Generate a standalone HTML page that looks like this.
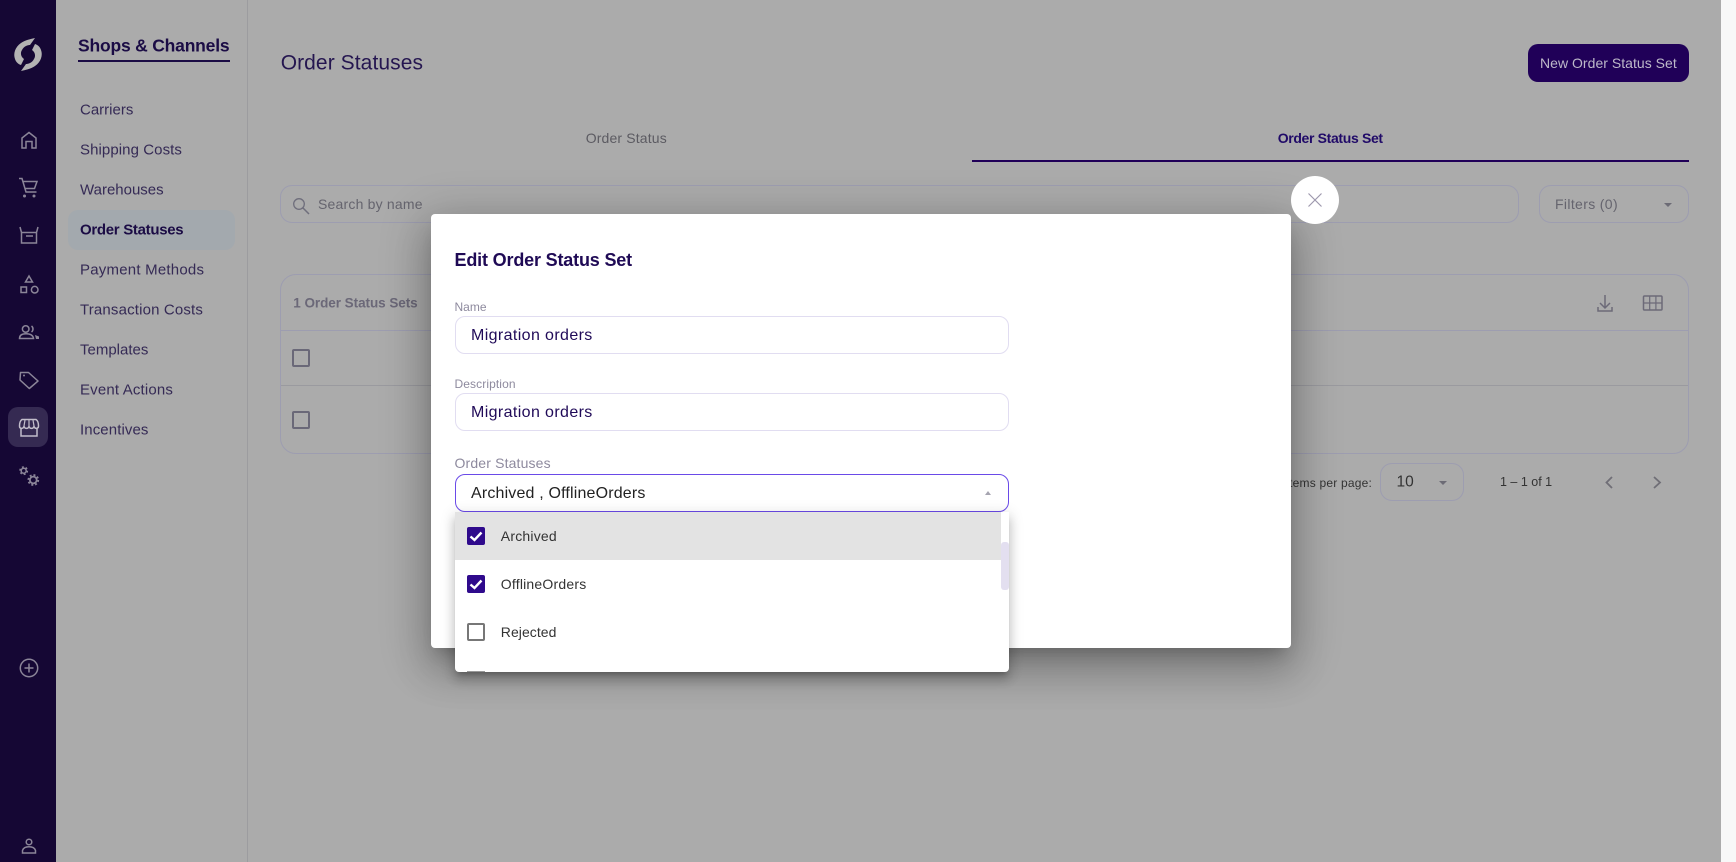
<!DOCTYPE html>
<html lang="en"><head><meta charset="utf-8"><title>Order Statuses</title>
<style>
html,body{margin:0;padding:0;width:1736px;height:862px;overflow:hidden;background:#ababab}
body{font-family:"Liberation Sans",sans-serif;position:relative}
.a{position:absolute;box-sizing:border-box}
.t{position:absolute;white-space:nowrap;transform:translateY(-50%);line-height:1}
.m{left:80px;font-size:15px;color:#352a55}
.lb{left:454.500px;font-size:12px;color:#8e8a9e}
.v{left:471px;font-size:16px;color:#200a58;letter-spacing:.38px}
.inp{left:455.300px;width:553.300px;height:38px;border:1px solid #e1ddf1;border-radius:10px;background:#fff}
.o{left:500.800px;font-size:14px;color:#333;letter-spacing:.2px}
.cb{left:467px;width:18px;height:18px;border-radius:2px;background:#2f0a8c}
svg{position:absolute;overflow:visible}
.s{fill:none;stroke:#8b8598;stroke-width:1.5}
</style></head><body>

<!-- rail -->
<div class="a" style="left:0;top:0;width:56px;height:862px;background:#150734"></div>
<svg style="left:0;top:0" width="56" height="862" viewBox="0 0 56 862">
<g fill="#b3b3b3">
<path d="M35 38C31 39 25 40 21 43C15 47 13 54 15 59C16 62 18 64 21 65L24 59C21 57 20 53 22 50C24 46 28 45 30 45Z"/>
<path d="M35 38C31 39 25 40 21 43C15 47 13 54 15 59C16 62 18 64 21 65L24 59C21 57 20 53 22 50C24 46 28 45 30 45Z" transform="rotate(180 28 54.5)"/>
</g>
<rect x="8" y="407" width="40" height="40" rx="10" fill="#352a52"/>
<!-- home -->
<path class="s" d="M22 148V138L29 132.500L36 138V148H32V141.500H26V148Z"/>
<!-- cart -->
<path class="s" d="M19 178.500H22L26 192H36.500M23 181.500H37L34.500 188.500H25"/>
<circle cx="24.500" cy="196" r="1.500" fill="#8b8598"/><circle cx="34" cy="196" r="1.500" fill="#8b8598"/>
<!-- box -->
<path class="s" d="M20 227L21.500 232.500V243H36.500V232.500L38 227M21.500 232.500H36.500"/><path d="M26 236H33" stroke="#8b8598" stroke-width="1.500"/>
<!-- shapes -->
<path class="s" d="M29 276L32.500 282H25.500Z"/><rect class="s" x="21" y="287" width="5.500" height="5.500"/><circle class="s" cx="34.700" cy="289.700" r="3.300"/>
<!-- people -->
<circle class="s" cx="25.700" cy="329" r="3.300"/><path class="s" d="M19.500 338.500C19.500 335 22 333.800 26 333.800C30 333.800 33 335 33.500 338.500Z"/><path class="s" d="M31.500 326C33.500 327.500 33.500 330.500 31.500 332"/><path d="M35 335L39 336.500V339H36Z" fill="#8b8598"/>
<!-- tag -->
<path class="s" d="M20.500 372.500H28.500L38 381L29.300 388.500L20 380Z" stroke-linejoin="round"/><circle cx="24" cy="375.500" r="1" fill="#8b8598"/>
<!-- shop -->
<path d="M21 422V436H37V422" fill="none" stroke="#c2bdcb" stroke-width="1.500"/>
<path d="M22 419.500H36C37.500 420.500 38.500 423 38.500 426C38.500 429 34.800 429 34 426.500C33 429 30 429 29 426.500C28 429 25 429 24 426.500C23 429 19.500 429 19.500 426C19.500 423 20.500 420.500 22 419.500Z" fill="#352a52" stroke="#c2bdcb" stroke-width="1.500"/>
<path d="M25 420L24 426M29 420V426M33 420L34 426" stroke="#c2bdcb" stroke-width="1.200"/>
<!-- gears -->
<circle class="s" cx="23.700" cy="470.700" r="2.500"/>
<circle cx="23.700" cy="470.700" r="3.700" fill="none" stroke="#8b8598" stroke-width="1.500" stroke-dasharray="1.900 1.975"/>
<circle cx="33.300" cy="480" r="3.400" fill="none" stroke="#8b8598" stroke-width="1.800"/>
<circle cx="33.300" cy="480" r="5" fill="none" stroke="#8b8598" stroke-width="1.700" stroke-dasharray="2 1.930"/>
<!-- plus -->
<circle class="s" cx="29" cy="668" r="8.700"/><path class="s" d="M29 663.500V672.500M24.500 668H33.500"/>
<!-- user -->
<circle class="s" cx="29" cy="842" r="2.800"/><path class="s" d="M22.500 853V850.500C23.500 847.500 26 846.800 29 846.800C32 846.800 34.500 847.500 35.500 850.500V853Z"/>
</svg>

<!-- secondary nav -->
<div class="a" style="left:247px;top:0;width:1px;height:862px;background:#9c9c9f"></div>
<div class="t" style="left:78px;top:46px;font-size:17.500px;font-weight:bold;color:#1b0c45;letter-spacing:-.2px">Shops &amp; Channels</div>
<div class="a" style="left:78px;top:60px;width:152px;height:2px;background:#1b0c45"></div>
<div class="a" style="left:68px;top:210px;width:167px;height:40px;border-radius:10px;background:#a3a9ae"></div>
<div class="t m" style="top:110px">Carriers</div>
<div class="t m" style="top:150px;letter-spacing:.08px">Shipping Costs</div>
<div class="t m" style="top:190px">Warehouses</div>
<div class="t m" style="top:230px;font-weight:bold;color:#1b0c45;letter-spacing:-.3px">Order Statuses</div>
<div class="t m" style="top:270px;letter-spacing:.22px">Payment Methods</div>
<div class="t m" style="top:310px;letter-spacing:.16px">Transaction Costs</div>
<div class="t m" style="top:350px">Templates</div>
<div class="t m" style="top:390px;letter-spacing:.17px">Event Actions</div>
<div class="t m" style="top:430px;letter-spacing:.1px">Incentives</div>

<!-- main -->
<div class="t" style="left:280.700px;top:63px;font-size:21px;color:#251650;letter-spacing:.08px">Order Statuses</div>
<div class="a" style="left:1528px;top:44px;width:161px;height:38px;border-radius:10px;background:#200058"></div>
<div class="t" style="left:1540px;top:62.500px;font-size:14px;color:#bdb8c9;letter-spacing:.03px">New Order Status Set</div>
<div class="t" style="left:585.700px;top:138px;font-size:14px;color:#5c5b62;letter-spacing:.15px">Order Status</div>
<div class="t" style="left:1277.700px;top:138px;font-size:14px;font-weight:bold;color:#200a68;letter-spacing:-.34px">Order Status Set</div>
<div class="a" style="left:972px;top:160px;width:717px;height:2px;background:#200058"></div>

<div class="a" style="left:280px;top:185px;width:1239px;height:38px;border:1px solid #9d9db0;border-radius:12px"></div>
<svg style="left:292px;top:197px" width="18" height="18" viewBox="0 0 18 18"><circle cx="7" cy="7" r="5.300" fill="none" stroke="#6f6e7c" stroke-width="1.300"/><path d="M11 11L17 17" stroke="#6f6e7c" stroke-width="1.500"/></svg>
<div class="t" style="left:318px;top:204px;font-size:14px;color:#65646e;letter-spacing:.2px">Search by name</div>
<div class="a" style="left:1539px;top:185px;width:150px;height:38px;border:1px solid #9d9db0;border-radius:12px"></div>
<div class="t" style="left:1555px;top:204px;font-size:14px;color:#65646e;letter-spacing:.35px">Filters (0)</div>
<div class="a" style="left:1664px;top:202.500px;border:4px solid transparent;border-top:4px solid #6c6b75;border-bottom:0"></div>

<div class="a" style="left:280px;top:274px;width:1409px;height:180px;border:1px solid #9d9db0;border-radius:16px"></div>
<div class="a" style="left:281px;top:330px;width:1407px;height:1px;background:#9d9db0"></div>
<div class="a" style="left:281px;top:385px;width:1407px;height:1px;background:#9a9a9f"></div>
<div class="t" style="left:293.300px;top:303px;font-size:13.500px;font-weight:bold;color:#6b6878;letter-spacing:-.05px">1 Order Status Sets</div>
<div class="a" style="left:292px;top:349px;width:18px;height:18px;border:2px solid #6a6878;border-radius:2px"></div>
<div class="a" style="left:292px;top:411px;width:18px;height:18px;border:2px solid #6a6878;border-radius:2px"></div>
<svg style="left:1590px;top:290px" width="80" height="26" viewBox="0 0 80 26" fill="none" stroke="#6c6a78" stroke-width="1.500">
<path d="M15 5V17M10 13L15 18L20 13M8 17V21H22V17"/>
<rect x="53.500" y="6" width="18.500" height="14" rx="1"/><path d="M59.700 6V20M65.900 6V20M53.500 13H72" stroke-width="1.200"/>
</svg>

<div class="t" style="right:364px;top:483px;font-size:12px;color:#333;letter-spacing:.2px">Items per page:</div>
<div class="a" style="left:1380px;top:463px;width:84px;height:38px;border:1px solid #9d9db0;border-radius:12px"></div>
<div class="t" style="left:1396.500px;top:482px;font-size:15.500px;color:#333">10</div>
<div class="a" style="left:1439px;top:480.500px;border:4px solid transparent;border-top:4px solid #6c6b75;border-bottom:0"></div>
<div class="t" style="left:1500px;top:482px;font-size:12.500px;color:#333">1 – 1 of 1</div>
<svg style="left:1600px;top:472px" width="70" height="20" viewBox="0 0 70 20" fill="none" stroke="#6f6e76" stroke-width="1.800"><path d="M12 5L6.500 10.500L12 16M54 5L60 10.500L54 16"/></svg>

<!-- scrollbar strip -->
<div class="a" style="left:1721px;top:0;width:15px;height:862px;background:#f8f8f8"></div>

<!-- modal -->
<div class="a" style="left:431px;top:214px;width:860px;height:434px;border-radius:4px;background:#fff;box-shadow:0 11px 15px -7px rgba(0,0,0,.2),0 24px 38px 3px rgba(0,0,0,.14),0 9px 46px 8px rgba(0,0,0,.2)"></div>
<div class="a" style="left:1291px;top:176px;width:48px;height:48px;border-radius:50%;background:#fff"></div>
<svg style="left:1308px;top:193px" width="14" height="14" viewBox="0 0 14 14"><path d="M.500 .500L13.500 13.500M13.500 .500L.500 13.500" stroke="#9e98ae" stroke-width="1.200"/></svg>
<div class="t" style="left:454.500px;top:260px;font-size:18px;font-weight:bold;color:#1f0a55;letter-spacing:-.17px">Edit Order Status Set</div>

<div class="t lb" style="top:307px">Name</div>
<div class="a inp" style="top:316px"></div>
<div class="t v" style="top:335.500px">Migration orders</div>
<div class="t lb" style="top:384px;letter-spacing:.1px">Description</div>
<div class="a inp" style="top:393px"></div>
<div class="t v" style="top:412.500px">Migration orders</div>
<div class="t lb" style="top:463px;font-size:14px;letter-spacing:.15px">Order Statuses</div>
<div class="a inp" style="top:474px;border:1.500px solid #6a4ae8"></div>
<div class="t" style="left:471px;top:494px;font-size:16px;color:#222;letter-spacing:.17px">Archived , OfflineOrders</div>
<div class="a" style="left:984.500px;top:490.500px;border:3.500px solid transparent;border-bottom:4px solid #a6a4b0;border-top:0"></div>

<!-- dropdown -->
<div class="a" style="left:455px;top:512px;width:554px;height:160px;background:#fff;border-radius:0 0 4px 4px;box-shadow:0 5px 5px -3px rgba(0,0,0,.2),0 8px 10px 1px rgba(0,0,0,.14),0 3px 14px 2px rgba(0,0,0,.12);overflow:hidden">
<div class="a" style="left:0;top:0;width:546px;height:48px;background:#e3e3e3"></div>
<div class="a" style="left:546px;top:30px;width:8px;height:48px;border-radius:3px;background:#e3dff0"></div>
<div class="a" style="left:12px;top:159px;width:18px;height:18px;background:#999"></div>
</div>
<div class="a cb" style="top:527px"></div>
<svg style="left:467px;top:527px" width="18" height="18" viewBox="0 0 18 18"><path d="M3.500 9.500L7.500 13L14.500 5.500" fill="none" stroke="#fff" stroke-width="2.400"/></svg>
<div class="t o" style="top:536px">Archived</div>
<div class="a cb" style="top:575px"></div>
<svg style="left:467px;top:575px" width="18" height="18" viewBox="0 0 18 18"><path d="M3.500 9.500L7.500 13L14.500 5.500" fill="none" stroke="#fff" stroke-width="2.400"/></svg>
<div class="t o" style="top:584px">OfflineOrders</div>
<div class="a cb" style="top:623px;background:#fff;border:2px solid #777"></div>
<div class="t o" style="top:632px;letter-spacing:.05px">Rejected</div>
</body></html>
